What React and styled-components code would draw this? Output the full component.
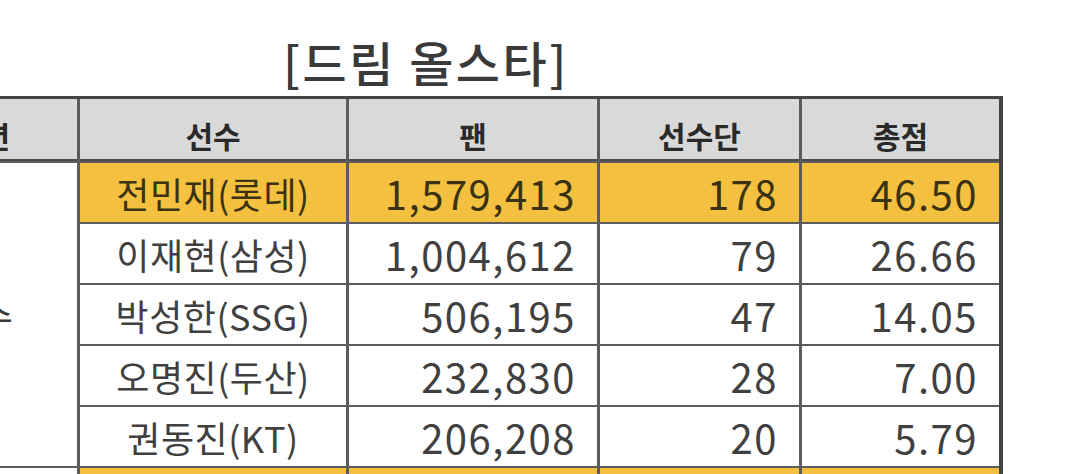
import React from 'react';
import styled, { createGlobalStyle } from 'styled-components';

const GlobalStyle = createGlobalStyle`
  html, body {
    margin: 0;
    padding: 0;
    background: #ffffff;
    overflow: hidden;
  }
  body {
    font-family: "Noto Sans CJK KR", "Noto Sans", sans-serif;
    color: #333333;
  }
`;

const Page = styled.div`
  width: 1079px;
  height: 474px;
  overflow: hidden;
`;

const Sheet = styled.div`
  margin-left: -125px;
  width: 1130px;
`;

const Title = styled.div`
  height: 96px;
  box-sizing: border-box;
  padding-top: 33px;
  padding-left: 408px;
  font-size: 48px;
  line-height: 56px;
  font-weight: 500;
  letter-spacing: 2.5px;
  color: #3a3a3a;
  white-space: nowrap;
`;

const Grid = styled.div`
  display: grid;
  grid-template-columns: 199px 266px 248px 199px 197px;
  grid-template-rows: 62px repeat(5, 59px) 59px;
  column-gap: 3px;
  row-gap: 2px;
  width: max-content;
  background: #5c5c5c;
  border-top: 3px solid #454545;
  border-right: 4px solid #454545;
  border-left: 3px solid #454545;
`;

const Head = styled.div`
  background: #d9d9d9;
  border-bottom: 2px solid #4a4a4a;
  box-sizing: border-box;
  display: flex;
  align-items: center;
  justify-content: ${p => (p.$edge ? 'flex-end' : 'center')};
  padding-top: 12px;
  padding-right: ${p => p.$edge || 0}px;
  font-size: 30px;
  font-weight: 700;
  color: #2a2a2a;
  white-space: nowrap;
`;

const Group = styled.div`
  grid-row: span ${p => p.$span};
  background: #ffffff;
  display: flex;
  align-items: center;
  justify-content: flex-end;
  padding-right: 64px;
  font-size: 36px;
  color: #3a3a3a;
  white-space: nowrap;
`;

const Cell = styled.div`
  background: ${p => (p.$hl ? '#f3c13f' : '#ffffff')};
  display: flex;
  align-items: center;
  justify-content: ${p => (p.$num ? 'flex-end' : 'center')};
  padding-right: ${p => (p.$num ? '21px' : '0')};
  font-size: ${p => (p.$num ? '40px' : '36px')};
  letter-spacing: ${p => (p.$num ? '1.5px' : '0.5px')};
  color: ${p => (p.$hl ? '#3a3210' : '#404040')};
  line-height: 1;
  white-space: nowrap;
`;

const players = [
  { name: '전민재(롯데)', fan: '1,579,413', team: '178', total: '46.50', top: true },
  { name: '이재현(삼성)', fan: '1,004,612', team: '79', total: '26.66' },
  { name: '박성한(SSG)', fan: '506,195', team: '47', total: '14.05' },
  { name: '오명진(두산)', fan: '232,830', team: '28', total: '7.00' },
  { name: '권동진(KT)', fan: '206,208', team: '20', total: '5.79' },
];

export default function App() {
  return (
    <Page>
      <GlobalStyle />
      <Sheet>
        <Title>[드림 올스타]</Title>
        <Grid>
          <Head $edge={67}>포지션</Head>
          <Head>선수</Head>
          <Head>팬</Head>
          <Head>선수단</Head>
          <Head>총점</Head>

          <Group $span={5}>유격수</Group>
          {players.map(p => (
            <React.Fragment key={p.name}>
              <Cell $hl={p.top} style={{ gridColumn: 2 }}>{p.name}</Cell>
              <Cell $hl={p.top} $num>{p.fan}</Cell>
              <Cell $hl={p.top} $num>{p.team}</Cell>
              <Cell $hl={p.top} $num>{p.total}</Cell>
            </React.Fragment>
          ))}

          <Group $span={1} />
          <Cell $hl />
          <Cell $hl $num />
          <Cell $hl $num />
          <Cell $hl $num />
        </Grid>
      </Sheet>
    </Page>
  );
}
